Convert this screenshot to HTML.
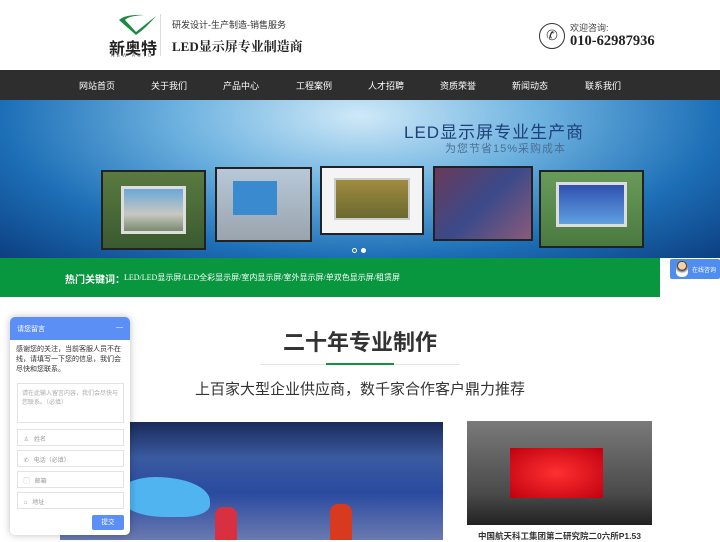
<!DOCTYPE html>
<html><head><meta charset="utf-8"><style>
*{margin:0;padding:0;box-sizing:border-box}
body{width:720px;height:540px;overflow:hidden;background:#fff;font-family:"Liberation Sans","Noto Sans CJK SC",sans-serif;position:relative}
.abs{position:absolute}
.nav{top:70px;left:0;width:720px;height:30px;background:#2e2e2e}
.nav span{position:absolute;top:9px;color:#fff;font-size:9px;width:60px;text-align:center}
.banner{top:100px;left:0;width:720px;height:158px;background:radial-gradient(ellipse at 50% 10%,#cfe9f8 0%,#6fb3e0 35%,#1d6fb7 70%,#0c3f80 100%)}
.scr{position:absolute;border:2px solid #222;}
.green{top:258px;left:0;width:660px;height:39px;background:#08963f}
.field{position:absolute;left:16px;width:107px;height:17px;border:1px solid #e3e3e3;font-size:6px;color:#999;padding:4px 0 0 4px}
</style></head><body>
<svg class="abs" style="left:116px;top:12px" width="46" height="24" viewBox="0 0 46 24"><path d="M3 8 Q10 2 28 3 Q12 4 9 8 L20 20 L40 4 Q30 16 20 23 Z" fill="#1a8a3e"/></svg>
<div class="abs" style="left:109px;top:35px;font-size:16px;font-weight:bold;color:#222">新奥特</div>
<div class="abs" style="left:111px;top:53px;font-size:5px;color:#777;letter-spacing:2px">NEW AUTO</div>
<div class="abs" style="left:160px;top:14px;width:1px;height:42px;background:#ddd"></div>
<div class="abs" style="left:172px;top:18px;font-size:9px;color:#333">研发设计-生产制造-销售服务</div>
<div class="abs" style="left:172px;top:36px;font-size:13px;font-weight:bold;color:#222;font-family:'Liberation Serif','Noto Serif CJK SC',serif">LED显示屏专业制造商</div>
<div class="abs" style="left:539px;top:23px;width:26px;height:26px;border:1.5px solid #333;border-radius:50%;font-size:14px;text-align:center;line-height:23px;color:#333">✆</div>
<div class="abs" style="left:570px;top:21px;font-size:9px;color:#444">欢迎咨询:</div>
<div class="abs" style="left:570px;top:33px;font-size:14.5px;font-weight:bold;color:#222;font-family:'Liberation Serif',serif">010-62987936</div>
<div class="abs nav">
<span style="left:67px">网站首页</span><span style="left:139px">关于我们</span><span style="left:211px">产品中心</span><span style="left:284px">工程案例</span><span style="left:356px">人才招聘</span><span style="left:428px">资质荣誉</span><span style="left:500px">新闻动态</span><span style="left:573px">联系我们</span>
</div>
<div class="abs banner">
<div class="abs" style="left:404px;top:18px;font-size:17px;color:#1d3f7a;letter-spacing:1px">LED显示屏专业生产商</div>
<div class="abs" style="left:445px;top:40px;font-size:11px;color:#4a6f95;letter-spacing:1px">为您节省15%采购成本</div>
<div class="scr" style="left:101px;top:70px;width:105px;height:80px;background:linear-gradient(#5a7a40,#3a5a30)"><div style="margin:14px 18px;height:48px;background:linear-gradient(#6aa8d8,#c8c8c0 60%,#7a8a70);border:3px solid #ddd"></div></div>
<div class="scr" style="left:215px;top:67px;width:97px;height:75px;background:linear-gradient(#b8c8d8,#9aa4ae)"><div style="margin:12px 0 0 16px;width:44px;height:34px;background:#3a8ad0"></div></div>
<div class="scr" style="left:320px;top:66px;width:104px;height:69px;background:#f4f4f4"><div style="margin:10px 12px;height:42px;background:linear-gradient(#a08a40,#6a6a30);border:2px solid #ccc"></div></div>
<div class="scr" style="left:433px;top:66px;width:100px;height:75px;background:linear-gradient(135deg,#6a3a5a,#3a4a8a,#8a5a7a)"></div>
<div class="scr" style="left:539px;top:70px;width:105px;height:78px;background:linear-gradient(#6a9a5a,#4a7a40)"><div style="margin:10px 15px;height:45px;background:linear-gradient(#3050b0,#60a0e0);border:3px solid #ddd"></div></div>
<div class="abs" style="left:352px;top:148px;width:5px;height:5px;border-radius:50%;border:1px solid #fff"></div>
<div class="abs" style="left:361px;top:148px;width:5px;height:5px;border-radius:50%;background:#fff"></div>
</div>
<div class="abs green">
<div class="abs" style="left:65px;top:13px;font-size:10px;font-weight:bold;color:#fff">热门关键词：</div>
<div class="abs" style="left:124px;top:14px;font-size:8px;color:#fff;font-family:'Liberation Serif','Noto Sans CJK SC',serif">LED/LED显示屏/LED全彩显示屏/室内显示屏/室外显示屏/单双色显示屏/租赁屏</div>
</div>
<div class="abs" style="left:670px;top:259px;width:50px;height:20px;background:#4f8ef0;border-radius:2px">
<div class="abs" style="left:6px;top:2px;width:12px;height:16px;background:radial-gradient(circle at 50% 30%,#f2d0b0 30%,#333 32%,#fff 60%);border-radius:5px"></div>
<div class="abs" style="left:22px;top:6px;font-size:6px;color:#fff">在线咨询</div></div>
<div class="abs" style="left:0;width:720px;top:325px;text-align:center;font-size:22px;color:#333;font-weight:bold">二十年专业制作</div>
<div class="abs" style="left:260px;top:364px;width:200px;height:1px;background:#e5e5e5"></div>
<div class="abs" style="left:326px;top:363px;width:68px;height:2px;background:#14923f"></div>
<div class="abs" style="left:0;width:720px;top:378px;text-align:center;font-size:15px;color:#333">上百家大型企业供应商，数千家合作客户鼎力推荐</div>
<div class="abs" style="left:60px;top:422px;width:383px;height:118px;background:linear-gradient(#1a2a5a 0%,#3a5aa0 30%,#2a4aa0 60%,#6a7ab0 100%)">
<div class="abs" style="left:60px;top:55px;width:90px;height:40px;background:#4fb4f0;border-radius:40% 60% 30% 50%"></div>
<div class="abs" style="left:155px;top:85px;width:22px;height:33px;background:#d83040;border-radius:8px 8px 0 0"></div>
<div class="abs" style="left:270px;top:82px;width:22px;height:36px;background:#d83a20;border-radius:8px 8px 0 0"></div>
</div>
<div class="abs" style="left:467px;top:421px;width:185px;height:104px;background:linear-gradient(#7a7a7a,#4a4a4a 70%,#222)">
<div class="abs" style="left:43px;top:27px;width:93px;height:50px;background:radial-gradient(#ff3030,#c00010);"></div></div>
<div class="abs" style="left:467px;top:530px;width:185px;text-align:center;font-size:8.5px;font-weight:bold;color:#333">中国航天科工集团第二研究院二0六所P1.53</div>
<div class="abs" style="left:10px;top:317px;width:120px;height:218px;background:#fff;border-radius:5px;box-shadow:0 0 8px rgba(0,0,0,.25);overflow:hidden">
<div style="height:23px;background:#5b8ff5;color:#fff;font-size:7px;padding:7px 7px">请您留言<span style="float:right">—</span></div>
<div style="font-size:7px;color:#333;line-height:10px;padding:5px 6px">感谢您的关注，当前客服人员不在线，请填写一下您的信息，我们会尽快和您联系。</div>
<div class="field" style="left:7px;top:66px;width:107px;height:40px;color:#aaa">请在此输入留言内容，我们会尽快与您联系。（必填）</div>
<div class="field" style="left:7px;top:112px;">&nbsp;♙&nbsp;&nbsp;&nbsp;姓名</div>
<div class="field" style="left:7px;top:133px;">&nbsp;✆&nbsp;&nbsp;&nbsp;电话（必填）</div>
<div class="field" style="left:7px;top:154px;">&nbsp;▢&nbsp;&nbsp;&nbsp;邮箱</div>
<div class="field" style="left:7px;top:175px;">&nbsp;⌂&nbsp;&nbsp;&nbsp;地址</div>
<div class="abs" style="left:82px;top:198px;width:32px;height:15px;background:#5b8ff5;color:#fff;font-size:6.5px;text-align:center;line-height:15px;border-radius:2px">提交</div>
</div>
</body></html>
